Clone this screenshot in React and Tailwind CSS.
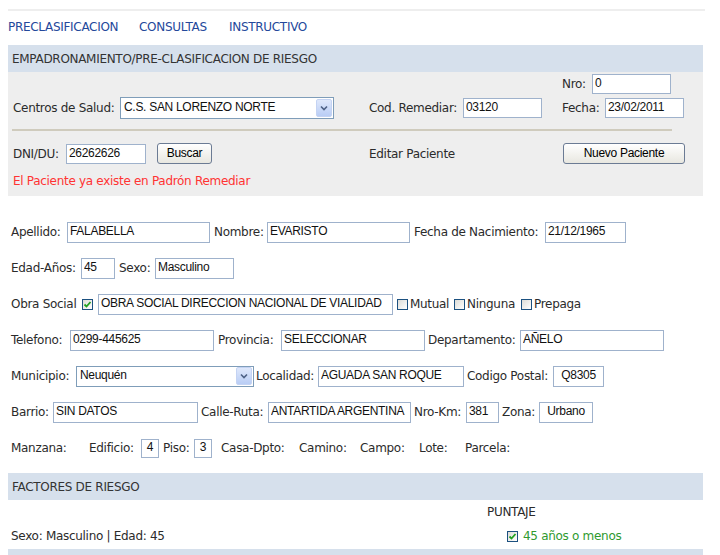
import React from 'react';

// Classic XP-style form inputs
function Input({ w, h = 'h-[21px]', value, center }) {
  return (
    <input
      readOnly
      value={value}
      className={`${w} ${h} shrink-0 border border-[#9fb2cc] bg-white pb-[2px] font-['Liberation_Sans',Arial,sans-serif] text-[12px] text-[#111] outline-none ${center ? 'text-center px-0' : 'px-[2px]'}`}
    />
  );
}

function Select({ w, h = 'h-[22px]', value }) {
  return (
    <div className={`${w} ${h} shrink-0 flex items-center border border-[#7f9db9] bg-white font-['Liberation_Sans',Arial,sans-serif] text-[12px] text-[#111]`}>
      <span className="flex-1 pl-[3px] pb-[2px] truncate">{value}</span>
      <span className="mr-[1px] flex h-[18px] w-[16px] items-center justify-center rounded-[2px] bg-gradient-to-b from-[#dfe8fb] to-[#b9cdf5] border border-[#c4d3f3]">
        <svg width="8" height="6" viewBox="0 0 8 6">
          <path d="M1 1.5 L4 4.5 L7 1.5" fill="none" stroke="#4d6185" strokeWidth="1.6" />
        </svg>
      </span>
    </div>
  );
}

function Button({ w, children }) {
  return (
    <button className={`${w} h-[21px] shrink-0 rounded-[3px] border border-[#6b7b94] bg-gradient-to-b from-white to-[#e8e7e0] pb-[2px] font-['Liberation_Sans',Arial,sans-serif] text-[12px] text-black leading-none`}>
      {children}
    </button>
  );
}

function Check({ checked }) {
  return (
    <span className="flex h-[11px] w-[11px] shrink-0 items-center justify-center border border-[#1c5180] bg-gradient-to-br from-[#dcdcd7] to-white">
      {checked && (
        <svg width="9" height="9" viewBox="0 0 9 9">
          <path d="M1.5 4.5 L3.5 6.5 L7.5 2" fill="none" stroke="#21a121" strokeWidth="1.8" />
        </svg>
      )}
    </span>
  );
}

function Label({ w, children, className = '' }) {
  return <span className={`${w} shrink-0 whitespace-nowrap ${className}`}>{children}</span>;
}

function Bar({ children }) {
  return (
    <div className="flex h-[27px] w-[695px] items-center bg-[#d6e0ec] pl-[4px] text-[#333]">
      {children}
    </div>
  );
}

export default function App() {
  return (
    <div className="min-h-[555px] bg-white px-[8px] pt-[9px] font-['DejaVu_Sans',Tahoma,sans-serif] text-[12px] tracking-[-0.3px] text-[#2b2b2b]">
      <div className="h-[2px] w-[697px] bg-[#eeeeee]" />

      {/* nav */}
      <nav className="mt-[6px] flex h-[20px] items-center text-[#24489b]">
        <a className="w-[131px]">PRECLASIFICACION</a>
        <a className="w-[90px]">CONSULTAS</a>
        <a>INSTRUCTIVO</a>
      </nav>

      <div className="mt-[8px]">
        <Bar>EMPADRONAMIENTO/PRE-CLASIFICACION DE RIESGO</Bar>
      </div>

      {/* search panel */}
      <div className="w-[695px] bg-[#eeeeee] pl-[5px] pt-[2px] pb-[7px]">
        <div className="flex h-[20px] items-center">
          <div className="w-[549px]" />
          <Label w="w-[30px]">Nro:</Label>
          <Input w="w-[79px]" h="h-[20px]" value="0" />
        </div>
        <div className="mt-[3px] flex h-[22px] items-center">
          <div className="flex w-[356px] items-center">
            <Label w="w-[107px]">Centros de Salud:</Label>
            <Select w="w-[214px]" value="C.S. SAN LORENZO NORTE" />
          </div>
          <div className="flex w-[193px] items-center">
            <Label w="w-[94px]">Cod. Remediar:</Label>
            <Input w="w-[79px]" h="h-[20px]" value="03120" />
          </div>
          <Label w="w-[43px]">Fecha:</Label>
          <Input w="w-[79px]" h="h-[20px]" value="23/02/2011" />
        </div>
        <div className="ml-[-1px] mt-[10px] h-[2px] w-[660px] bg-[#cfcbbd]" />
        <div className="mt-[12px] flex h-[21px] items-center">
          <div className="flex w-[356px] items-center">
            <Label w="w-[53px]">DNI/DU:</Label>
            <Input w="w-[80px]" h="h-[20px]" value="26262626" />
            <span className="ml-[11px]">
              <Button w="w-[55px]">Buscar</Button>
            </span>
          </div>
          <div className="w-[194px]">Editar Paciente</div>
          <Button w="w-[122px]">Nuevo Paciente</Button>
        </div>
        <div className="mt-[9px] flex h-[16px] items-center text-[#ff3333]">
          El Paciente ya existe en Padrón Remediar
        </div>
      </div>

      {/* patient data */}
      <div className="mt-[18px] pl-[3px]">
        <div className="flex h-[36px] items-center">
          <Label w="w-[56px]">Apellido:</Label>
          <Input w="w-[143px]" value="FALABELLA" />
          <Label w="w-[53px]" className="ml-[4px]">Nombre:</Label>
          <Input w="w-[143px]" value="EVARISTO" />
          <Label w="w-[131px]" className="ml-[4px]">Fecha de Nacimiento:</Label>
          <Input w="w-[81px]" value="21/12/1965" />
        </div>
        <div className="flex h-[36px] items-center">
          <Label w="w-[70px]">Edad-Años:</Label>
          <Input w="w-[34px]" value="45" />
          <Label w="w-[36px]" className="ml-[4px]">Sexo:</Label>
          <Input w="w-[79px]" value="Masculino" />
        </div>
        <div className="flex h-[36px] items-center">
          <Label w="w-[71px]">Obra Social</Label>
          <Check checked />
          <span className="ml-[5px]">
            <Input w="w-[295px]" value="OBRA SOCIAL DIRECCION NACIONAL DE VIALIDAD" />
          </span>
          <span className="ml-[4px]"><Check /></span>
          <Label w="w-[44px]" className="ml-[2px]">Mutual</Label>
          <Check />
          <Label w="w-[54px]" className="ml-[2px]">Ninguna</Label>
          <Check />
          <Label w="w-[60px]" className="ml-[2px]">Prepaga</Label>
        </div>
        <div className="flex h-[36px] items-center">
          <Label w="w-[59px]">Telefono:</Label>
          <Input w="w-[144px]" value="0299-445625" />
          <Label w="w-[63px]" className="ml-[4px]">Provincia:</Label>
          <Input w="w-[144px]" value="SELECCIONAR" />
          <Label w="w-[92px]" className="ml-[3px]">Departamento:</Label>
          <Input w="w-[144px]" value="AÑELO" />
        </div>
        <div className="flex h-[36px] items-center">
          <Label w="w-[65px]">Municipio:</Label>
          <Select w="w-[178px]" h="h-[21px]" value="Neuquén" />
          <Label w="w-[62px]" className="ml-[2px]">Localidad:</Label>
          <Input w="w-[146px]" value="AGUADA SAN ROQUE" />
          <Label w="w-[86px]" className="ml-[3px]">Codigo Postal:</Label>
          <Input w="w-[51px]" value="Q8305" center />
        </div>
        <div className="flex h-[36px] items-center">
          <Label w="w-[42px]">Barrio:</Label>
          <Input w="w-[145px]" value="SIN DATOS" />
          <Label w="w-[67px]" className="ml-[3px]">Calle-Ruta:</Label>
          <Input w="w-[143px]" value="ANTARTIDA ARGENTINA" />
          <Label w="w-[52px]" className="ml-[3px]">Nro-Km:</Label>
          <Input w="w-[33px]" value="381" />
          <Label w="w-[37px]" className="ml-[3px]">Zona:</Label>
          <Input w="w-[54px]" value="Urbano" center />
        </div>
        <div className="flex h-[36px] items-center">
          <Label w="w-[78px]">Manzana:</Label>
          <Label w="w-[52px]">Edificio:</Label>
          <Input w="w-[18px]" h="h-[19px]" value="4" center />
          <Label w="w-[31px]" className="ml-[4px]">Piso:</Label>
          <Input w="w-[18px]" h="h-[19px]" value="3" center />
          <Label w="w-[78px]" className="ml-[9px]">Casa-Dpto:</Label>
          <Label w="w-[61px]">Camino:</Label>
          <Label w="w-[59px]">Campo:</Label>
          <Label w="w-[46px]">Lote:</Label>
          <Label w="w-[60px]">Parcela:</Label>
        </div>
      </div>

      <div className="mt-[7px]">
        <Bar>FACTORES DE RIESGO</Bar>
      </div>

      <div className="mt-[2px] flex h-[20px] items-center pl-[479px]">PUNTAJE</div>
      <div className="mt-[4px] flex h-[20px] items-center pl-[3px]">
        <span className="w-[496px]">Sexo: Masculino | Edad: 45</span>
        <Check checked />
        <span className="ml-[5px] text-[#2f9a2f]">45 años o menos</span>
      </div>
      <div className="mt-[3px] h-[20px] w-[695px] bg-[#d6e0ec]" />
    </div>
  );
}
